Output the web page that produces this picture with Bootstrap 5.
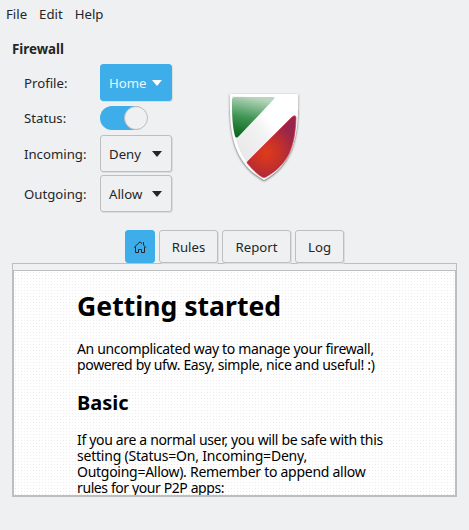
<!DOCTYPE html>
<html lang="en">
<head>
<meta charset="utf-8">
<meta name="viewport" content="width=device-width, initial-scale=1">
<title>Firewall</title>
<link href="https://cdn.jsdelivr.net/npm/bootstrap@5.3.0/dist/css/bootstrap.min.css" rel="stylesheet">
<style>
body{width:469px;height:530px;background:#eff0f1;color:#232629;font:13.2px/20px "Noto Sans",sans-serif;overflow:hidden}
.menu-strip{height:28px;padding:4px 6px;gap:12px}
.menu-strip .nav-link{color:#232629;padding:0}
.app-title{font-size:13.33px;font-weight:700;line-height:20px;height:25px;padding:11px 0 0 12px;margin:0 0 11px}
.settings{width:172px;padding-left:24px}
.setting{height:37px}
.status-row{height:24px;margin:5px 0}
.status-row label{width:76px}
.outgoing-row{margin-top:3px}
.btn{--bs-btn-color:#232629;--bs-btn-bg:#eff0f1;--bs-btn-border-color:#bcbebf;--bs-btn-font-size:13.2px;--bs-btn-border-radius:3px;font-family:inherit;line-height:20px;box-shadow:1px 1px 0 #dcdddf}
.pick{width:72px;height:37px;padding:0 9px 0 8px}
.pick svg{width:10px;height:6px}
.btn-profile{--bs-btn-color:#e8f5fc;--bs-btn-bg:#3daee9;--bs-btn-border-color:#3daee9}
.toggle-art{width:48px;height:24px}
.top-area{height:166px}
.shield{width:84px;height:98px;margin-left:50px;margin-top:23px}
.tab-strip{height:33px;gap:4px}
.tab-strip .btn{height:33px;padding:0}
.tab-strip .btn-home{width:30px;--bs-btn-bg:#3daee9;--bs-btn-border-color:#3daee9;box-shadow:none}
.tab-rules{width:59px}
.tab-report{width:69px}
.tab-log{width:49px}
.frame{width:445px;height:234px;margin-left:12px;border:1px solid #bcbebf;padding-top:6px}
.doc{height:226px;border:1px solid #bcbebf;background-color:#fff;background-image:radial-gradient(circle at 1.5px 1.5px,#e4e4e4 0 .7px,transparent .8px),radial-gradient(circle at 1.5px 1.5px,#f0f0f0 0 .7px,transparent .8px);background-size:6px 6px,3px 3px;color:#000;padding:0 0 0 63px;overflow:hidden}
.doc h1{font:700 26.6px/32px "Noto Sans",sans-serif;margin:19px 0;white-space:nowrap}
.doc h2{font:700 20px/24px "Noto Sans",sans-serif;margin:18px 0 17px}
.doc p{font-size:14px;line-height:16px;margin:0;white-space:nowrap;letter-spacing:-.335px}
.doc .loose{letter-spacing:-.21px}
.doc .medium{letter-spacing:-.27px}
.doc .tight{letter-spacing:-.4px}
</style>
</head>
<body>
<nav class="nav menu-strip d-flex"><a class="nav-link">File</a><a class="nav-link">Edit</a><a class="nav-link">Help</a></nav>
<h1 class="app-title">Firewall</h1>
<main>
<section class="top-area d-flex align-items-start">
<div class="settings d-flex flex-column flex-shrink-0">
<div class="setting d-flex align-items-center justify-content-between"><label>Profile:</label><button class="btn btn-profile pick d-flex align-items-center justify-content-between">Home<svg viewBox="0 0 10 6"><path d="M0 0h10L5 6z" fill="#fff"/></svg></button></div>
<div class="status-row d-flex align-items-center"><label>Status:</label><svg class="toggle-art" viewBox="0 0 48 24"><rect width="47" height="24" rx="12" fill="#3daee9"/><circle cx="36" cy="12" r="11.5" fill="#eff0f1" stroke="#bcbebf"/></svg></div>
<div class="setting d-flex align-items-center justify-content-between"><label>Incoming:</label><button class="btn pick d-flex align-items-center justify-content-between">Deny<svg viewBox="0 0 10 6"><path d="M0 0h10L5 6z" fill="#232629"/></svg></button></div>
<div class="setting outgoing-row d-flex align-items-center justify-content-between"><label>Outgoing:</label><button class="btn pick d-flex align-items-center justify-content-between">Allow<svg viewBox="0 0 10 6"><path d="M0 0h10L5 6z" fill="#232629"/></svg></button></div>
</div>
<svg class="shield" viewBox="0 0 84 98">
<defs>
<linearGradient id="green" x1=".2" y1="1" x2=".4" y2="0"><stop stop-color="#07651b"/><stop offset=".5" stop-color="#3f9553"/><stop offset="1" stop-color="#b8d6bd"/></linearGradient>
<radialGradient id="red" gradientUnits="userSpaceOnUse" cx="44" cy="66" r="31"><stop stop-color="#df3b1c"/><stop offset=".45" stop-color="#c73128"/><stop offset="1" stop-color="#98264a"/></radialGradient>
<linearGradient id="white" x1="0" y1="1" x2="1" y2="0"><stop stop-color="#e2e2e2"/><stop offset=".5" stop-color="#f2f2f2"/><stop offset=".65" stop-color="#fff"/></linearGradient>
<filter id="shade" x="-20%" y="-20%" width="140%" height="140%"><feDropShadow dx="0" dy="1" stdDeviation="1.3" flood-color="#333" flood-opacity=".8"/></filter>
</defs>
<path d="M8 7H76C77 48 72 76 42 93C12 76 7 48 8 7Z" fill="#fff" filter="url(#shade)"/>
<path d="M10 9H74C75 47 69 74 42 90C15 74 9 47 10 9Z" fill="url(#white)"/>
<path d="M13 10H50Q54 10 52 12L17 49Q14 52 13 49C10 38 10 24 10 13Q10 10 13 10Z" fill="url(#green)"/>
<path d="M26 74L70 30Q74 27 74 31C73 59 67 77 44 90Q42 91 40 90C35 87 30 82 26 77Q24 76 26 74Z" fill="url(#red)" stroke="#dc3748" stroke-width=".7"/>
</svg>
</section>
<div class="tab-strip d-flex justify-content-center" role="tablist">
<button class="btn btn-home d-flex align-items-center justify-content-center" aria-label="Home"><svg width="14" height="14" viewBox="0 0 14 14" fill="none" stroke="#232629"><path d="M1 7.5L7 1.8L9 3.7M10.5 5L13 7.5M2.5 7V12.5H5.5V9.5H8.5V12.5H11.5V7M10.5 2V5"/></svg></button>
<button class="btn tab-rules">Rules</button><button class="btn tab-report">Report</button><button class="btn tab-log">Log</button>
</div>
<section class="frame"><article class="doc">
<h1>Getting started</h1>
<p>An uncomplicated way to manage your firewall,<br>powered by ufw. Easy, simple, nice and useful! :)</p>
<h2>Basic</h2>
<p>If you are a normal user, you will be safe with this<br><span class="loose">setting (Status=On, Incoming=Deny,</span><br><span class="medium">Outgoing=Allow). Remember to append allow</span><br><span class="tight">rules for your P2P apps:</span></p>
</article></section>
</main>
<script src="https://cdn.jsdelivr.net/npm/bootstrap@5.3.0/dist/js/bootstrap.bundle.min.js"></script>
</body>
</html>
